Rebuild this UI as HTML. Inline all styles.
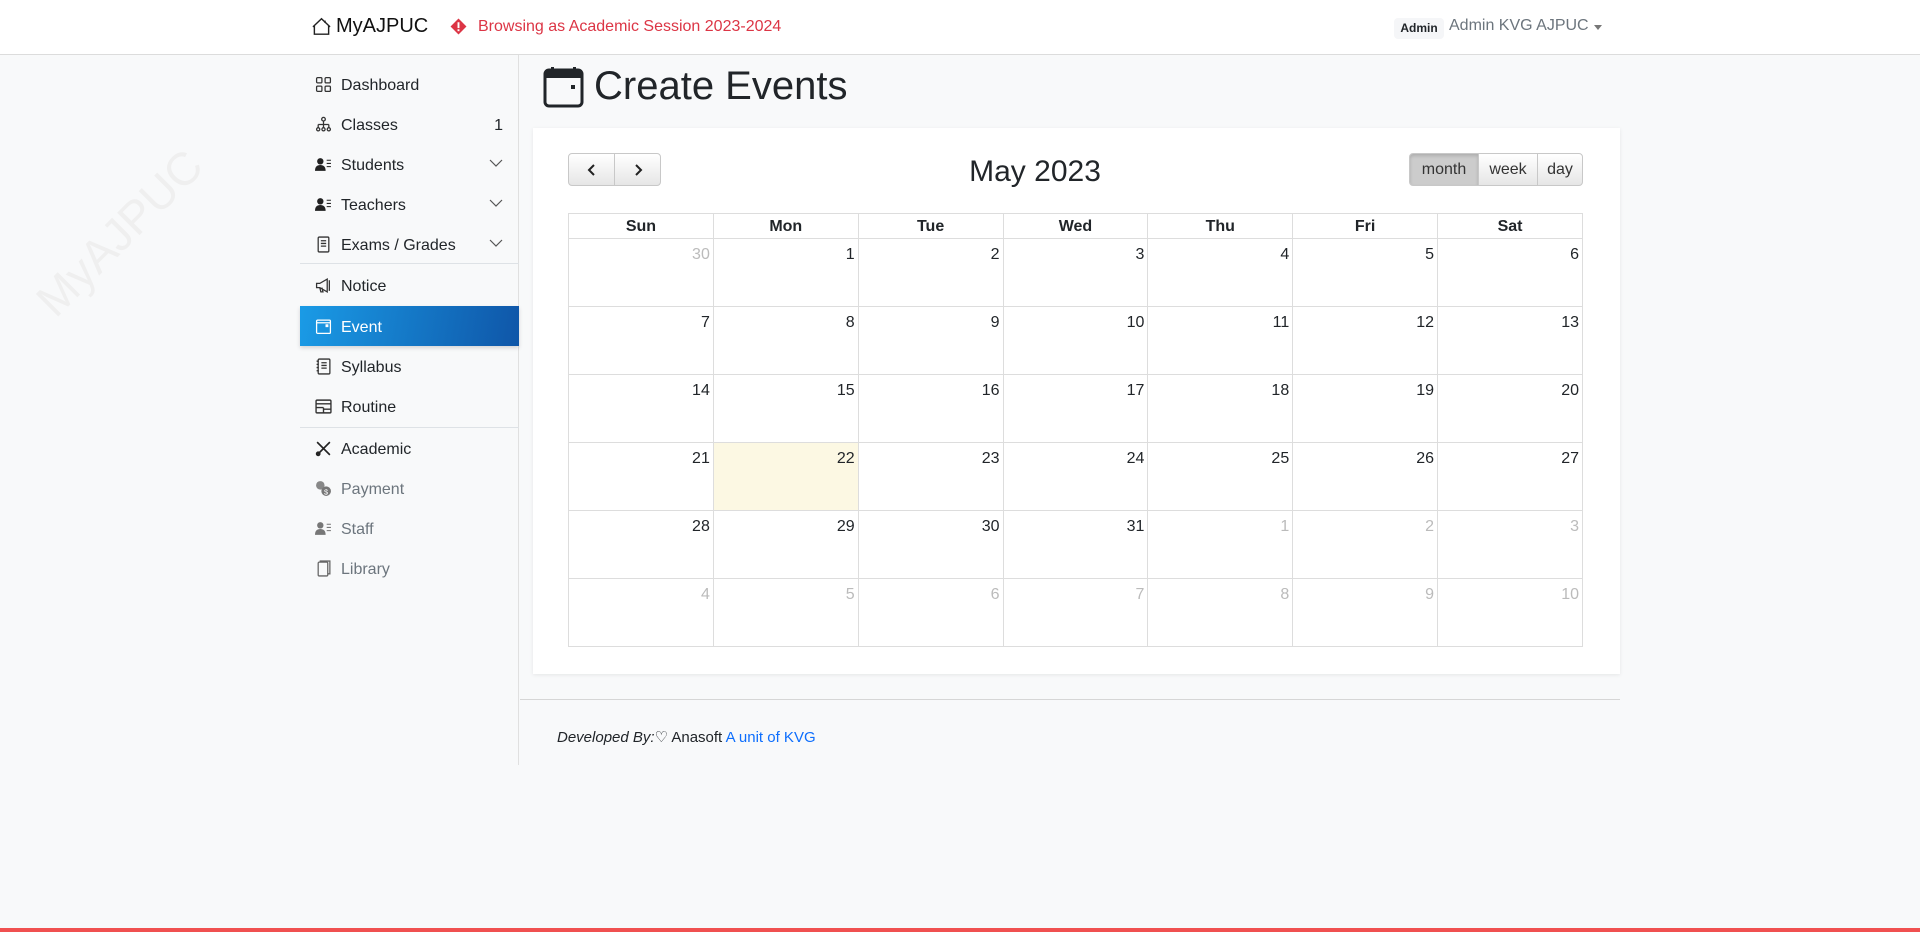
<!DOCTYPE html>
<html><head><meta charset="utf-8">
<style>
*{box-sizing:border-box;margin:0;padding:0}
body{width:1920px;height:932px;background:#f8f9fa;font-family:"Liberation Sans",sans-serif;color:#212529;position:relative;overflow:hidden}
.abs{position:absolute}
.hdr{left:0;top:0;width:1920px;height:55px;background:#fff;border-bottom:1px solid #dcdcdc}
.side{left:300px;top:55px;width:219px;height:710px;border-right:1px solid #e0e0e0}
.item{position:absolute;left:0;width:219px;height:40px;font-size:16px;display:flex;align-items:center;padding-left:15px;padding-top:3px}
.item svg{width:17px;height:17px;margin-right:9px;margin-top:-3px}
.item .chev{position:absolute;right:16px;top:14px;width:14px;height:10px;margin:0}
.div{position:absolute;left:0;width:219px;height:1px;background:#dee2e6}
.gray{color:#6c757d}
.card{left:533px;top:128px;width:1087px;height:546px;background:#fff;box-shadow:0 1px 4px rgba(0,0,0,.08)}
table{position:absolute;left:568px;top:213px;width:1015px;border-collapse:collapse;table-layout:fixed}
th{height:25px;border:1px solid #ddd;font-size:16px;font-weight:bold;text-align:center;padding-top:2px}
td{height:68px;border:1px solid #ddd;vertical-align:top;text-align:right;padding:7px 3px 0 0;font-size:16px}
td.o{color:#bbb}
td.t{background:#fcf8e3}
.btn{position:absolute;height:33px;border:1px solid #c8c8c8;background:linear-gradient(#fff,#e6e6e6);font-size:16px;display:flex;align-items:center;justify-content:center;color:#333}
</style></head><body>
<div class="abs hdr"></div>
<svg class="abs" style="left:312px;top:17px" width="19" height="19" viewBox="0 0 16 16"><path d="M2 7.5V14.5H14V7.5M0.8 8.3L8 1.5 15.2 8.3M11 3V5" fill="none" stroke="#222" stroke-width="1.2"/></svg>
<div class="abs" style="left:336px;top:15px;font-size:20px;color:#111">MyAJPUC</div>
<svg class="abs" style="left:450px;top:18px" width="17" height="17" viewBox="0 0 16 16"><path d="M8 0.5L15.5 8 8 15.5 0.5 8Z" fill="#dc3545"/><rect x="7.1" y="4" width="1.8" height="5.5" fill="#fff"/><rect x="7.1" y="10.6" width="1.8" height="1.8" fill="#fff"/></svg>
<div class="abs" style="left:478px;top:18px;font-size:16px;color:#dc3545">Browsing as Academic Session 2023-2024</div>
<div class="abs" style="left:1394px;top:18px;width:50px;height:21px;background:#f5f6f8;border-radius:4px;font-size:12px;font-weight:bold;text-align:center;line-height:21px">Admin</div>
<div class="abs" style="left:1449px;top:17px;font-size:16px;color:#6c757d">Admin KVG AJPUC</div>
<div class="abs" style="left:1594px;top:25px;width:0;height:0;border-left:4px solid transparent;border-right:4px solid transparent;border-top:5px solid #777"></div>

<div class="abs" style="left:15px;top:210px;transform:rotate(-45deg);transform-origin:center;font-size:46px;color:#efefef;width:200px">MyAJPUC</div>

<div class="abs side">
<div class="item" style="top:9px"><svg viewBox="0 0 16 16" fill="none" stroke="#333" stroke-width="1.2"><rect x="1.5" y="1.5" width="5" height="5" rx="1"/><rect x="9.5" y="1.5" width="5" height="5" rx="1"/><rect x="1.5" y="9.5" width="5" height="5" rx="1"/><rect x="9.5" y="9.5" width="5" height="5" rx="1"/></svg>Dashboard</div>
<div class="item" style="top:49px"><svg viewBox="0 0 16 16" fill="none" stroke="#333" stroke-width="1.2"><circle cx="8" cy="3" r="1.7"/><path d="M8 5v3M3 8h10M3 8v3M8 8v3M13 8v3"/><circle cx="3" cy="12.5" r="1.5"/><circle cx="8" cy="12.5" r="1.5"/><circle cx="13" cy="12.5" r="1.5"/></svg>Classes<span style="position:absolute;right:16px">1</span></div>
<div class="item" style="top:89px"><svg viewBox="0 0 16 16"><circle cx="5" cy="5" r="3" fill="#222"/><path d="M0 14c0-4 2-5.5 5-5.5s5 1.5 5 5.5Z" fill="#222"/><path d="M11 4h4M11 7h4M11 10h4" stroke="#222"/></svg>Students<svg class="chev" viewBox="0 0 14 10"><path d="M1 2l6 6 6-6" fill="none" stroke="#555" stroke-width="1.2"/></svg></div>
<div class="item" style="top:129px"><svg viewBox="0 0 16 16"><circle cx="5" cy="5" r="3" fill="#222"/><path d="M0 14c0-4 2-5.5 5-5.5s5 1.5 5 5.5Z" fill="#222"/><path d="M11 4h4M11 7h4M11 10h4" stroke="#222"/></svg>Teachers<svg class="chev" viewBox="0 0 14 10"><path d="M1 2l6 6 6-6" fill="none" stroke="#555" stroke-width="1.2"/></svg></div>
<div class="item" style="top:169px"><svg viewBox="0 0 16 16" fill="none" stroke="#333" stroke-width="1.2"><rect x="3" y="1" width="10" height="14" rx="1"/><path d="M5.5 4.5h5M5.5 7h5M5.5 9.5h5"/></svg>Exams / Grades<svg class="chev" viewBox="0 0 14 10"><path d="M1 2l6 6 6-6" fill="none" stroke="#555" stroke-width="1.2"/></svg></div>
<div class="div" style="top:208px"></div>
<div class="item" style="top:210px"><svg viewBox="0 0 16 16" fill="none" stroke="#333" stroke-width="1.2"><path d="M1.5 6h3l7-4v12l-7-4h-3ZM4.5 10l1 4h2l-1-4M13.5 3v10"/></svg>Notice</div>
<div class="item" style="top:251px;height:40px;background:linear-gradient(100deg,#1a9be6,#0f56a8);color:#fff;box-shadow:0 2px 4px rgba(0,0,0,.15)"><svg viewBox="0 0 16 16" fill="none" stroke="#fff" stroke-width="1.2"><rect x="1.5" y="2" width="13" height="12.5" rx="1"/><path d="M1.5 4.5h13"/><rect x="10.5" y="6.5" width="1.5" height="1.5" fill="#fff"/></svg>Event</div>
<div class="item" style="top:291px"><svg viewBox="0 0 16 16" fill="none" stroke="#333" stroke-width="1.2"><rect x="3" y="1" width="11" height="14" rx="1"/><path d="M6 4.5h5M6 7h5M6 9.5h5M1.5 3h2M1.5 6h2M1.5 9h2M1.5 12h2"/></svg>Syllabus</div>
<div class="item" style="top:331px"><svg viewBox="0 0 16 16" fill="none" stroke="#333" stroke-width="1.3"><rect x="1" y="2" width="14" height="12" rx="1"/><path d="M1 5.5h14M1 9h7M8 9v5M8 10.5h7"/></svg>Routine</div>
<div class="div" style="top:372px"></div>
<div class="item" style="top:373px"><svg viewBox="0 0 16 16" fill="none" stroke="#222" stroke-width="1.5"><path d="M2 2l12 12M14 2L2 14"/><circle cx="3" cy="13" r="1.5"/></svg>Academic</div>
<div class="item gray" style="top:413px"><svg viewBox="0 0 16 16"><circle cx="5" cy="5" r="4" fill="#888"/><circle cx="10.5" cy="10.5" r="4.5" fill="#777"/><text x="8.5" y="13.5" font-size="7" fill="#fff">$</text></svg>Payment</div>
<div class="item gray" style="top:453px"><svg viewBox="0 0 16 16"><circle cx="5" cy="5" r="3" fill="#777"/><path d="M0 14c0-4 2-5.5 5-5.5s5 1.5 5 5.5Z" fill="#777"/><path d="M11 4h4M11 7h4M11 10h4" stroke="#777"/></svg>Staff</div>
<div class="item gray" style="top:493px"><svg viewBox="0 0 16 16" fill="none" stroke="#666" stroke-width="1.2"><rect x="3" y="2" width="9" height="13" rx="1"/><path d="M5 2V1h9v12h-2"/></svg>Library</div>
</div>

<svg class="abs" style="left:543px;top:66px" width="41" height="42" viewBox="0 0 41 42"><rect x="2" y="4" width="37" height="36" rx="4" fill="none" stroke="#212529" stroke-width="3"/><rect x="2" y="4" width="37" height="8" fill="#212529"/><rect x="8" y="1" width="3" height="5" fill="#212529"/><rect x="30" y="1" width="3" height="5" fill="#212529"/><rect x="28" y="19" width="4" height="4" fill="#212529"/></svg>
<div class="abs" style="left:594px;top:64px;font-size:40px;color:#212529">Create Events</div>

<div class="abs card"></div>
<div class="btn" style="left:568px;top:153px;width:47px;border-radius:4px 0 0 4px"><svg width="12" height="14" viewBox="0 0 12 14"><path d="M8 2L3 7l5 5" fill="none" stroke="#222" stroke-width="2"/></svg></div>
<div class="btn" style="left:614px;top:153px;width:47px;border-radius:0 4px 4px 0"><svg width="12" height="14" viewBox="0 0 12 14"><path d="M4 2l5 5-5 5" fill="none" stroke="#222" stroke-width="2"/></svg></div>
<div class="abs" style="left:900px;top:155px;width:270px;text-align:center;font-size:30px">May 2023</div>
<div class="btn" style="left:1409px;top:153px;width:70px;border-radius:4px 0 0 4px;background:#ccc;box-shadow:inset 0 2px 3px rgba(0,0,0,.15)">month</div>
<div class="btn" style="left:1478px;top:153px;width:60px">week</div>
<div class="btn" style="left:1537px;top:153px;width:46px;border-radius:0 4px 4px 0">day</div>

<table>
<tr><th>Sun</th><th>Mon</th><th>Tue</th><th>Wed</th><th>Thu</th><th>Fri</th><th>Sat</th></tr>
<tr><td class="o">30</td><td>1</td><td>2</td><td>3</td><td>4</td><td>5</td><td>6</td></tr>
<tr><td>7</td><td>8</td><td>9</td><td>10</td><td>11</td><td>12</td><td>13</td></tr>
<tr><td>14</td><td>15</td><td>16</td><td>17</td><td>18</td><td>19</td><td>20</td></tr>
<tr><td>21</td><td class="t">22</td><td>23</td><td>24</td><td>25</td><td>26</td><td>27</td></tr>
<tr><td>28</td><td>29</td><td>30</td><td>31</td><td class="o">1</td><td class="o">2</td><td class="o">3</td></tr>
<tr><td class="o">4</td><td class="o">5</td><td class="o">6</td><td class="o">7</td><td class="o">8</td><td class="o">9</td><td class="o">10</td></tr>
</table>

<div class="abs" style="left:520px;top:699px;width:1100px;height:1px;background:#d6d6d6"></div>
<div class="abs" style="left:557px;top:728px;font-size:15px"><i>Developed By:</i>&#9825; Anasoft <span style="color:#0d6efd">A unit of KVG</span></div>
<div class="abs" style="left:0;top:928px;width:1920px;height:4px;background:#f05050"></div>
</body></html>
